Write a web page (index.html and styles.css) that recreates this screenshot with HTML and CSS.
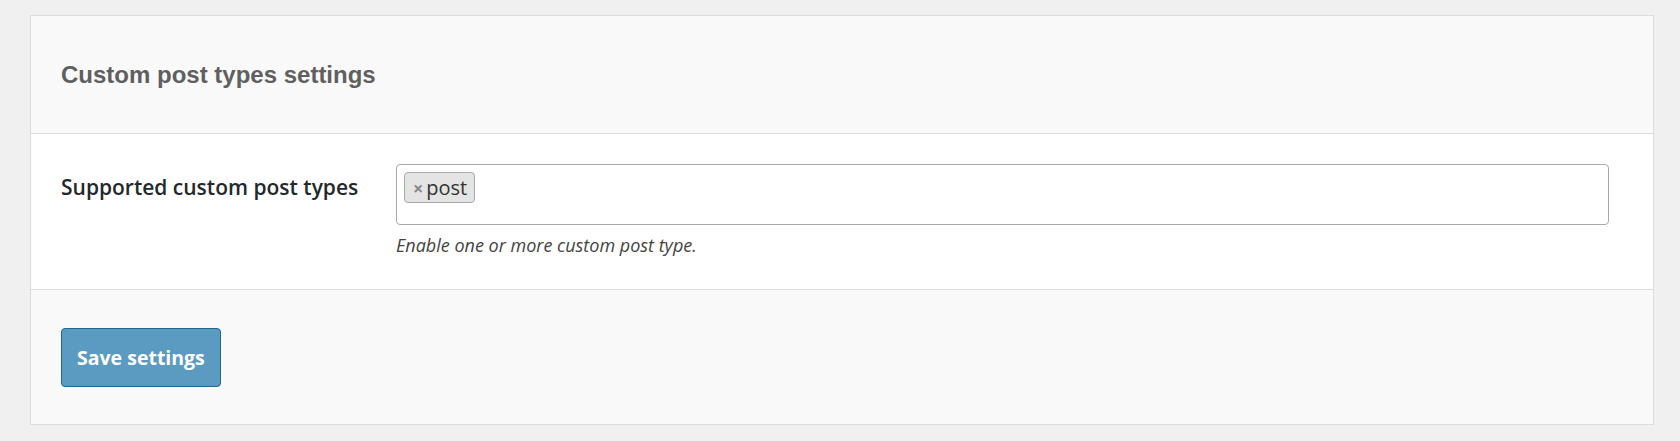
FILE: index.html
```html
<!DOCTYPE html>
<html lang="en">
<head>
    <meta charset="UTF-8">
    <meta name="viewport" content="width=device-width, initial-scale=1.0">
    <title>Custom post types settings</title>
    <link rel="stylesheet" href="styles.css">
</head>
<body>
    <div class="settings-card">
        <div class="card-header">
            <h2>Custom post types settings</h2>
        </div>

        <div class="card-row">
            <label class="row-label">Supported custom post types</label>
            <div class="row-field">
                <div class="tag-select">
                    <span class="tag"><span class="tag-remove">×</span>post</span>
                </div>
                <p class="description">Enable one or more custom post type.</p>
            </div>
        </div>

        <div class="card-footer">
            <button class="save-btn">Save settings</button>
        </div>
    </div>
</body>
</html>
```

FILE: styles.css
```css
body {
    margin: 0;
    padding: 15px 26px 16px 30px;
    background-color: #f0f0f0;
    font-family: "Open Sans", sans-serif;
    color: #333;
}

.settings-card {
    border: 1px solid #dcdcdc;
    background-color: #f9f9f9;
}

.card-header {
    height: 117px;
    padding: 0 30px;
    display: flex;
    align-items: center;
    border-bottom: 1px solid #dcdcdc;
}

.card-header h2 {
    margin: 0;
    font-family: "Liberation Sans", Arial, sans-serif;
    font-size: 24px;
    font-weight: bold;
    color: #5f5f5f;
}

.card-row {
    display: flex;
    background-color: #fff;
    padding: 30px 44px 32px 30px;
    border-bottom: 1px solid #dcdcdc;
}

.row-label {
    width: 335px;
    flex-shrink: 0;
    font-size: 21px;
    font-weight: 600;
    color: #23282d;
    padding-top: 9px;
}

.row-field {
    flex: 1;
}

.tag-select {
    height: 61px;
    border: 1px solid #aaa;
    border-radius: 4px;
    background-color: #fff;
    padding: 7px 7px;
    box-sizing: border-box;
}

.tag {
    display: inline-flex;
    align-items: center;
    height: 31px;
    box-sizing: border-box;
    padding: 0 7px 0 8px;
    border: 1px solid #aaa;
    border-radius: 4px;
    background-color: #e4e4e4;
    font-size: 20px;
    color: #333;
}

.tag-remove {
    color: #888;
    font-weight: bold;
    font-size: 18px;
    margin-right: 3px;
}

.description {
    margin: 8px 0 0;
    font-size: 18px;
    font-style: italic;
    color: #444;
}

.card-footer {
    padding: 38px 30px 37px;
}

.save-btn {
    height: 59px;
    padding: 0 15px;
    font-family: "Open Sans", sans-serif;
    font-size: 19.5px;
    font-weight: bold;
    color: #fff;
    background-color: #5b9ac1;
    border: 1px solid #1f6691;
    border-radius: 4px;
    cursor: pointer;
}
```
